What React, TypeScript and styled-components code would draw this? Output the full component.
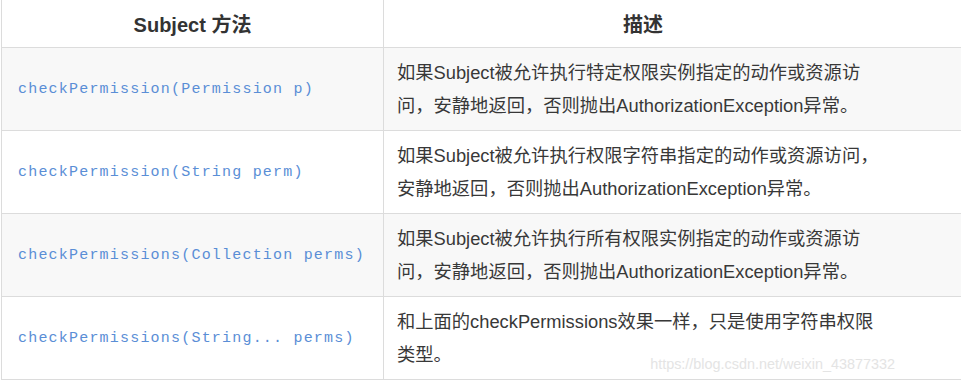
import styled, { createGlobalStyle } from "styled-components";

const GlobalStyle = createGlobalStyle`
  html, body {
    margin: 0;
    padding: 0;
    background: #ffffff;
  }
  body {
    font-family: "Liberation Sans", "Noto Sans CJK SC", sans-serif;
  }
`;

const rows = [
  {
    method: "checkPermission(Permission p)",
    desc: "如果Subject被允许执行特定权限实例指定的动作或资源访问，安静地返回，否则抛出AuthorizationException异常。",
  },
  {
    method: "checkPermission(String perm)",
    desc: "如果Subject被允许执行权限字符串指定的动作或资源访问，安静地返回，否则抛出AuthorizationException异常。",
  },
  {
    method: "checkPermissions(Collection perms)",
    desc: "如果Subject被允许执行所有权限实例指定的动作或资源访问，安静地返回，否则抛出AuthorizationException异常。",
  },
  {
    method: "checkPermissions(String... perms)",
    desc: "和上面的checkPermissions效果一样，只是使用字符串权限类型。",
  },
];

const Page = styled.div`
  position: relative;
  width: 961px;
  height: 381px;
  overflow: hidden;
`;

const Table = styled.div`
  display: grid;
  grid-template-columns: 382px 1fr;
  width: 980px;
  margin: -1px 0 0 1px;
  border-left: 1px solid #dcdcdc;
  border-top: 1px solid #dcdcdc;
`;

const Cell = styled.div<{ $striped?: boolean; $first?: boolean }>`
  display: flex;
  align-items: center;
  box-sizing: border-box;
  background: ${(p) => (p.$striped ? "#f8f8f8" : "#ffffff")};
  border-bottom: 1px solid #dcdcdc;
  border-right: ${(p) => (p.$first ? "1px solid #dcdcdc" : "none")};
  min-height: 83px;
`;

const HeadCell = styled.div<{ $first?: boolean; $shift?: number }>`
  box-sizing: border-box;
  height: 48px;
  display: flex;
  align-items: center;
  justify-content: center;
  padding-right: ${(p) => p.$shift ?? 0}px;
  border-bottom: 1px solid #dcdcdc;
  border-right: ${(p) => (p.$first ? "1px solid #dcdcdc" : "none")};
  font-size: 20px;
  font-weight: bold;
  color: #333333;
`;

const Code = styled.code`
  padding-left: 16px;
  font-family: "Liberation Mono", "DejaVu Sans Mono", monospace;
  font-size: 15px;
  letter-spacing: 1.2px;
  color: #5a8ed6;
  white-space: nowrap;
`;

const Desc = styled.div`
  padding: 8px 13px;
  width: 488px;
  font-size: 18.3px;
  line-height: 33px;
  color: #383838;
`;

const Watermark = styled.div`
  position: absolute;
  right: 66px;
  bottom: 9px;
  font-family: "Liberation Sans", sans-serif;
  font-size: 14.4px;
  color: #e4e4e4;
  pointer-events: none;
`;

export default function App() {
  return (
    <>
      <GlobalStyle />
      <Page>
        <Table>
          <HeadCell $first>Subject 方法</HeadCell>
          <HeadCell $shift={80}>描述</HeadCell>
          {rows.map((r, i) => (
            <>
              <Cell key={`m${i}`} $first $striped={i % 2 === 0}>
                <Code>{r.method}</Code>
              </Cell>
              <Cell key={`d${i}`} $striped={i % 2 === 0}>
                <Desc>{r.desc}</Desc>
              </Cell>
            </>
          ))}
        </Table>
        <Watermark>https://blog.csdn.net/weixin_43877332</Watermark>
      </Page>
    </>
  );
}
